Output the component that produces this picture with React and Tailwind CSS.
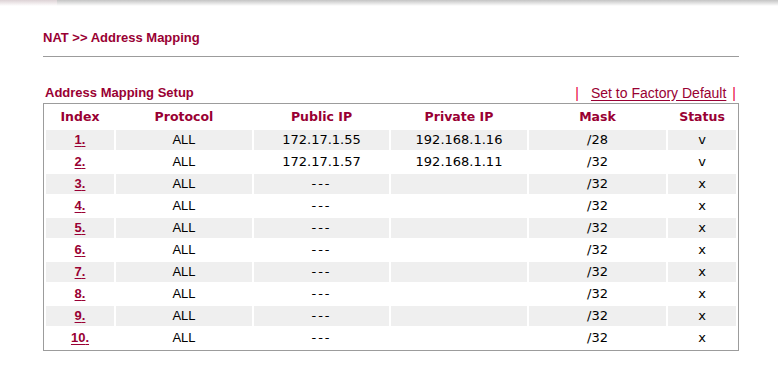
import React from 'react';

const rows = [
  { id: 1, protocol: 'ALL', pub: '172.17.1.55', priv: '192.168.1.16', mask: '/28', status: 'v' },
  { id: 2, protocol: 'ALL', pub: '172.17.1.57', priv: '192.168.1.11', mask: '/32', status: 'v' },
  { id: 3, protocol: 'ALL', pub: '---', priv: '', mask: '/32', status: 'x' },
  { id: 4, protocol: 'ALL', pub: '---', priv: '', mask: '/32', status: 'x' },
  { id: 5, protocol: 'ALL', pub: '---', priv: '', mask: '/32', status: 'x' },
  { id: 6, protocol: 'ALL', pub: '---', priv: '', mask: '/32', status: 'x' },
  { id: 7, protocol: 'ALL', pub: '---', priv: '', mask: '/32', status: 'x' },
  { id: 8, protocol: 'ALL', pub: '---', priv: '', mask: '/32', status: 'x' },
  { id: 9, protocol: 'ALL', pub: '---', priv: '', mask: '/32', status: 'x' },
  { id: 10, protocol: 'ALL', pub: '---', priv: '', mask: '/32', status: 'x' },
];

const headers = ['Index', 'Protocol', 'Public IP', 'Private IP', 'Mask', 'Status'];

const App = () => {
  return (
    <div className="w-[778px] h-[392px] bg-white font-['Liberation_Sans',Arial,sans-serif]">
      {/* frame shadow at the top */}
      <div className="flex h-[6px]">
        <div className="w-[57px] bg-gradient-to-b from-[#ddd2d5] to-white"></div>
        <div className="flex-1 bg-gradient-to-b from-[#c4c4c4] to-white"></div>
      </div>

      <div className="ml-[43px] w-[696px]">
        <h1 className="mt-[24px] text-[13px] leading-[16px] font-bold text-[#990033]">
          NAT &gt;&gt; Address Mapping
        </h1>
        <div className="mt-[10px] h-px bg-[#9c9c9c]"></div>

        <div className="mt-[28px] flex items-center justify-between h-[16px] pl-[2px] pr-[3px]">
          <span className="text-[13px] font-bold text-[#990033]">Address Mapping Setup</span>
          <div className="flex items-center text-[14px]">
            <span className="text-[#e8003c]">|</span>
            <a href="#" className="ml-[12px] text-[#990033] underline underline-offset-2">Set to Factory Default</a>
            <span className="ml-[6px] text-[#e8003c]">|</span>
          </div>
        </div>

        <div className="mt-[2px] border border-[#9c9c9c] p-[2px]">
          <div className="grid grid-cols-[68px_136px_135px_136px_137px_68px] gap-[2px]">
            {headers.map((h) => (
              <div
                key={h}
                className="h-[22px] flex items-center justify-center font-['DejaVu_Sans',Verdana,sans-serif] font-bold text-[12.5px] text-[#990033]"
              >
                {h}
              </div>
            ))}
            {rows.map((r, i) => {
              const bg = i % 2 === 0 ? 'bg-[#efefef]' : 'bg-white';
              const cell = `h-[20px] flex items-center justify-center ${bg}`;
              return (
                <React.Fragment key={r.id}>
                  <div className={cell}>
                    <a href="#" className="text-[13px] font-bold text-[#990033] underline underline-offset-2">
                      {r.id}.
                    </a>
                  </div>
                  <div className={`${cell} text-[13px] text-black`}>{r.protocol}</div>
                  <div
                    className={`${cell} font-['DejaVu_Sans',Verdana,sans-serif] text-[13px] text-black ${
                      r.pub === '---' ? 'tracking-[2px]' : ''
                    }`}
                  >
                    {r.pub}
                  </div>
                  <div className={`${cell} font-['DejaVu_Sans',Verdana,sans-serif] text-[13px] text-black`}>
                    {r.priv}
                  </div>
                  <div className={`${cell} font-['DejaVu_Sans',Verdana,sans-serif] text-[13px] text-black`}>
                    {r.mask}
                  </div>
                  <div className={`${cell} font-['DejaVu_Sans',Verdana,sans-serif] text-[13px] text-black`}>
                    {r.status}
                  </div>
                </React.Fragment>
              );
            })}
          </div>
        </div>
      </div>
    </div>
  );
};

export default App;
